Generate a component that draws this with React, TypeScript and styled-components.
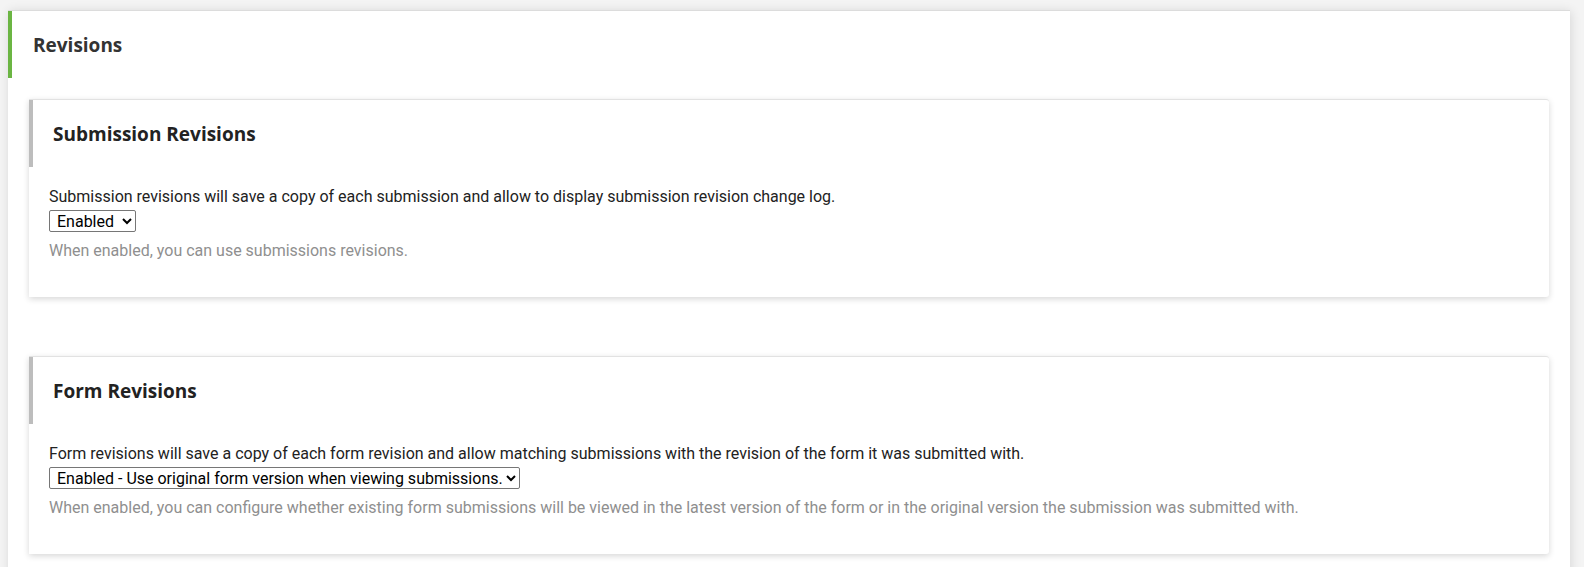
import React from "react";
import styled, { createGlobalStyle } from "styled-components";

const GlobalStyle = createGlobalStyle`
  html, body {
    margin: 0;
    padding: 0;
    background: #f4f4f4;
  }
  body {
    font-family: Roboto, "Liberation Sans", Arial, sans-serif;
    color: #222;
  }
`;

const Page = styled.div`
  padding: 10px 14px 0 8px;
`;

const OuterCard = styled.section`
  background: #fff;
  border-top: 1px solid #dcdcdc;
  box-shadow: 1px 1px 10px rgba(0, 0, 0, 0.12);
  padding-bottom: 24px;
`;

const OuterHeader = styled.div`
  height: 67px;
  display: flex;
  align-items: center;
  border-left: 4px solid #6bb543;
  padding-left: 21px;
  font-family: "Open Sans", "Noto Sans", sans-serif;
  font-weight: 700;
  font-size: 19px;
  color: #333;
`;

const Cards = styled.div`
  display: flex;
  flex-direction: column;
  gap: 59px;
  padding: 21px 21px 0 21px;
`;

const Card = styled.div`
  background: #fff;
  border-top: 1px solid #e2e2e2;
  border-radius: 0 3px 3px 0;
  box-shadow: 0 2px 6px rgba(0, 0, 0, 0.16);
`;

const CardHeader = styled.div`
  height: 67px;
  display: flex;
  align-items: center;
  border-left: 4px solid #bdbdbd;
  padding-left: 20px;
  font-family: "Open Sans", "Noto Sans", sans-serif;
  font-weight: 700;
  font-size: 19px;
  color: #222;
`;

const CardBody = styled.div`
  padding: 17px 20px 34px 20px;
  font-size: 16px;
  line-height: 1.6;
`;

const Description = styled.div`
  color: #222;
`;

const Select = styled.select`
  display: block;
  height: 22px;
  font-family: Roboto, "Liberation Sans", Arial, sans-serif;
  font-size: 16px;
  color: #000;
  background: #fff;
  border: 1px solid #767676;
  border-radius: 2px;
  padding: 0 0 0 3px;
`;

const Help = styled.div`
  margin-top: 6px;
  color: #8f8f8f;
`;

type SectionProps = {
  title: string;
  description: string;
  options: string[];
  help: string;
};

const Section = ({ title, description, options, help }: SectionProps) => (
  <Card>
    <CardHeader>{title}</CardHeader>
    <CardBody>
      <Description>{description}</Description>
      <Select defaultValue={options[0]}>
        {options.map((o) => (
          <option key={o} value={o}>
            {o}
          </option>
        ))}
      </Select>
      <Help>{help}</Help>
    </CardBody>
  </Card>
);

export default function App() {
  return (
    <>
      <GlobalStyle />
      <Page>
        <OuterCard>
          <OuterHeader>Revisions</OuterHeader>
          <Cards>
            <Section
              title="Submission Revisions"
              description="Submission revisions will save a copy of each submission and allow to display submission revision change log."
              options={["Enabled", "Disabled"]}
              help="When enabled, you can use submissions revisions."
            />
            <Section
              title="Form Revisions"
              description="Form revisions will save a copy of each form revision and allow matching submissions with the revision of the form it was submitted with."
              options={[
                "Enabled - Use original form version when viewing submissions.",
                "Enabled - Use latest form version when viewing submissions.",
                "Disabled",
              ]}
              help="When enabled, you can configure whether existing form submissions will be viewed in the latest version of the form or in the original version the submission was submitted with."
            />
          </Cards>
        </OuterCard>
      </Page>
    </>
  );
}
